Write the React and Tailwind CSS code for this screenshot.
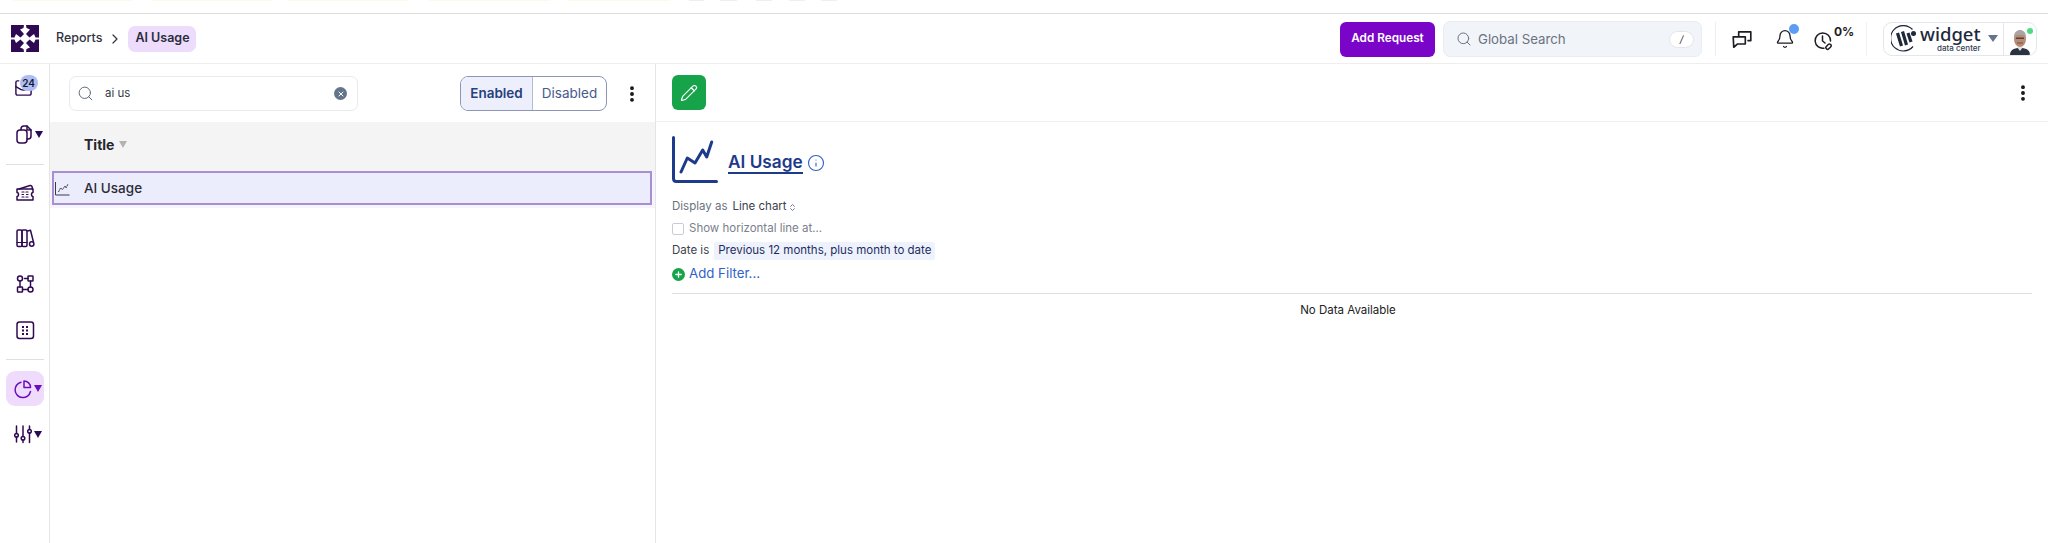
import React from "react";
import { Search, ChevronRight, Bell, Info, Pencil, Plus, X, EllipsisVertical, ChevronsUpDown } from "lucide-react";

const Caret = ({ className = "text-[#2a0a57]" }) => (
  <svg width="8" height="7" viewBox="0 0 8 7" className={className}><path d="M0 0h8L4 7z" fill="currentColor" /></svg>
);

const Logo = () => (
  <svg width="28" height="27" viewBox="0 0 28 27" className="shrink-0" fill="#2f0a52">
    <path d="M0 0H13L12.500 3L9 4.500L13 9L9.500 12.500L5 9L3.500 12.500H0z" />
    <path d="M28 0H15L15.500 3L19 4.500L15 9L18.500 12.500L23 9L24.500 12.500H28z" />
    <path d="M0 27H13L12.500 24L9 22.500L13 18L9.500 14.500L5 18L3.500 14.500H0z" />
    <path d="M28 27H15L15.500 24L19 22.500L15 18L18.500 14.500L23 18L24.500 14.500H28z" />
  </svg>
);

const WidgetMark = () => (
  <svg width="27" height="27" viewBox="0 0 27 27" className="shrink-0" fill="none" stroke="#1e293b">
    <path d="M22 21.500A12.700 12.700 0 1 1 21.500 4.500" strokeWidth="1.200" />
    <path d="M6.500 8l4 13M11.500 6.500l4 13.500M17 8l3 9" strokeWidth="3.200" />
    <circle cx="22.500" cy="8.500" r="2.500" fill="#1e293b" stroke="none" />
  </svg>
);

const Avatar = () => (
  <svg width="22" height="26" viewBox="0 0 22 26">
    <path d="M1 26c0-6 5-7 10-7s10 1 10 7z" fill="#2b3340" />
    <path d="M8 18h6l-3 4z" fill="#e8e4e0" />
    <ellipse cx="11" cy="10" rx="6" ry="8" fill="#b58c78" />
    <path d="M5 8c0-5 3-7 6-7s6 2 6 7c-2-3-10-3-12 0z" fill="#a9a5a2" />
    <rect x="7" y="8.500" width="8" height="1.500" fill="#5b4238" />
    <rect x="8" y="13.500" width="6" height="1" fill="#7a4a40" />
  </svg>
);

const Ico = ({ children, w = 20, h = 20, className = "text-[#2f0a52]" }) => (
  <svg width={w} height={h} viewBox="0 0 20 20" fill="none" stroke="currentColor" strokeWidth="1.500" strokeLinecap="round" strokeLinejoin="round" className={className}>
    {children}
  </svg>
);

const TopStrip = () => (
  <div className="flex h-[13px] items-start">
    <div className="flex h-[1px] w-full">
      <span className="w-[13px]" />
      <span className="w-[120px] bg-[#fbfbe8]" />
      <span className="w-[19px]" />
      <span className="w-[120px] bg-[#fbfbe8]" />
      <span className="w-[16px]" />
      <span className="w-[120px] bg-[#fbfbe8]" />
      <span className="w-[21px]" />
      <span className="w-[121px] bg-[#fbfbe8]" />
      <span className="w-[18px]" />
      <span className="w-[102px] bg-[#fbfbe8]" />
      <span className="w-[19px]" />
      <span className="w-[15px] bg-[#eeeff3]" />
      <span className="w-[16px]" />
      <span className="w-[17px] bg-[#eeeff3]" />
      <span className="w-[19px]" />
      <span className="w-[16px] bg-[#eeeff3]" />
      <span className="w-[17px]" />
      <span className="w-[16px] bg-[#eeeff3]" />
      <span className="w-[16px]" />
      <span className="w-[16px] bg-[#eeeff3]" />
    </div>
  </div>
);

const Header = () => (
  <header className="flex h-[51px] items-center border-t border-b border-t-[#dcdcdc] border-b-[#eeeeee] pl-[11px] pr-[11px]">
    <Logo />
    <span className="ml-[17px] text-[12.5px] font-medium text-[#33333f]">Reports</span>
    <ChevronRight size={16} strokeWidth={1.800} className="ml-[5px] text-[#33333f]" />
    <span className="ml-[5px] flex h-[26px] w-[68px] items-center justify-center rounded-[7px] bg-[#eedcfc] text-[12.5px] font-semibold text-[#2c2c3d]">AI Usage</span>
    <div className="flex-1" />
    <button className="mt-[1px] flex h-[35px] w-[95px] items-center justify-center rounded-[6px] bg-[#7a05c8] text-[11.75px] font-semibold text-white">Add Request</button>
    <div className="ml-[8px] mt-[1px] flex h-[36px] w-[259px] items-center rounded-[7px] border border-[#e9edf3] bg-[#f1f4f8] pl-[12px] pr-[7px]">
      <Search size={16} strokeWidth={1.500} className="text-[#6b7280]" />
      <span className="ml-[6px] pt-[1px] text-[13.25px] text-[#6b7280]">Global Search</span>
      <div className="flex-1" />
      <span className="flex h-[17px] w-[25px] items-center justify-center rounded-full border border-[#e2e5ea] bg-white text-[10px] italic text-[#333]">/</span>
    </div>
    <div className="ml-[13px] h-[34px] w-px bg-[#eeeeee]" />
    <div className="ml-[15px]">
      <Ico w={22} h={22} className="text-[#1c1c24]">
        <path d="M7 8V3.500h11v8h-2.500" />
        <path d="M2 8h11v6.500H6L2.500 17.500z" fill="#fff" />
      </Ico>
    </div>
    <div className="relative ml-[22px]">
      <Bell size={20} strokeWidth={1.600} className="text-[#1c1c24]" />
      <span className="absolute right-[-4px] top-[-5px] h-[10px] w-[10px] rounded-full bg-[#5b9cf6]" />
    </div>
    <div className="relative ml-[18px] flex h-[30px] w-[42px] items-start">
      <svg width="20" height="20" viewBox="0 0 20 20" className="mt-[7px]" fill="none" stroke="#1c1c24" strokeWidth="1.500">
        <path d="M11 17.200A7.700 7.700 0 1 1 17.500 10" strokeLinecap="round" />
        <path d="M9.500 5v5l2.500 2" strokeLinecap="round" />
        <rect x="12.500" y="14" width="6" height="3.400" rx="1.700" transform="rotate(-45 15.500 15.700)" />
      </svg>
      <span className="ml-[1px] mt-[1px] text-[12px] font-bold leading-[14px] text-[#1c1c24]">0%</span>
    </div>
    <div className="ml-[11px] h-[34px] w-px bg-[#f2f2f2]" />
    <div className="ml-[16px] flex h-[34px] w-[154px] items-stretch overflow-hidden rounded-[9px] border border-[#e3e6ea]">
      <div className="flex w-[120px] items-center border-r border-[#e3e6ea] pl-[7px]">
        <WidgetMark />
        <div className="ml-[2px] flex flex-col items-end">
          <span className="text-[18.5px] font-medium leading-[18px] text-[#1e293b]" style={{ fontFamily: '"Noto Sans", sans-serif' }}>widget</span>
          <span className="mt-[1px] text-[8px] font-medium leading-[9px] text-[#334155]">data center</span>
        </div>
        <svg width="10" height="7" viewBox="0 0 10 7" className="ml-[7px] text-[#64748b]"><path d="M0 0h10L5 7z" fill="currentColor" /></svg>
      </div>
      <div className="relative flex flex-1 items-end justify-center">
        <Avatar />
        <span className="absolute right-[3px] top-[5px] h-[6px] w-[6px] rounded-full bg-[#4ade80]" />
      </div>
    </div>
  </header>
);

const Sidebar = () => (
  <aside className="flex w-[50px] shrink-0 flex-col items-center border-r border-[#e5e5e8] pt-[11px]">
    <div className="relative h-[24px] w-[38px]">
      <span className="absolute left-[8px] top-[3px]">
        <Ico w={19} h={19}>
          <path d="M5 3H3.500Q2 3 2 4.500V16q0 2 2 2h12q2 0 2-2V4.500Q18 3 16.500 3" />
          <path d="M2 9l5 3q3 1.500 6 0l5-3" />
        </Ico>
      </span>
      <span className="absolute left-[14px] top-0 flex h-[16px] w-[18px] items-center justify-center rounded-full bg-[#aebdf3] text-[10px] font-semibold text-[#1a1a2e]">24</span>
    </div>
    <div className="mt-[25px] flex h-[20px] items-center gap-[1px] pl-[8px]">
      <Ico>
        <path d="M7 6V5Q7 2 10 2H13L17 6V12Q17 15 14 15H13" />
        <path d="M13 2V6H17" />
        <rect x="3" y="6" width="10" height="13" rx="3" />
      </Ico>
      <Caret />
    </div>
    <div className="mt-[20px] h-px w-[38px] bg-[#dfdfe3]" />
    <div className="mt-[17px] h-[20px]">
      <Ico>
        <path d="M4 7l11-3.500q1.500-.3 2 1L17.500 7" />
        <path d="M2 7h16v3.500q-1.500 0-1.500 2t1.500 2V18H2v-3.500q1.500 0 1.500-2T2 10.500z" />
        <path d="M7 10h2M7 15h2M11 10h2M11 15h2M7 12.500h1.500M11.500 12.500H13" strokeWidth="1.200" />
      </Ico>
    </div>
    <div className="mt-[26px] h-[20px]">
      <Ico>
        <rect x="2" y="2" width="5" height="16.500" rx="1.200" />
        <rect x="7" y="2" width="5" height="16.500" rx="1.200" />
        <path d="M12.500 3l3-.8 3 12" />
        <circle cx="16.700" cy="16" r="2.200" />
        <path d="M2 14.500h10" strokeWidth="1.200" />
      </Ico>
    </div>
    <div className="mt-[26px] h-[20px]">
      <Ico>
        <circle cx="5" cy="4.500" r="2.500" />
        <path d="M5 7v6" />
        <rect x="2.500" y="13" width="5" height="5" rx=".6" />
        <rect x="13" y="2" width="5" height="5" rx=".6" />
        <path d="M7.500 15.500H13M13 4.500H9.500" />
        <path d="M15.500 7v6" />
        <circle cx="15.500" cy="15.500" r="2.500" />
      </Ico>
    </div>
    <div className="mt-[26px] h-[20px]">
      <Ico>
        <rect x="2" y="2" width="16.500" height="16.500" rx="2.500" />
        <path d="M7 7h2M11 7h2M7 10.500h2M11 10.500h2M7 14h2M11 14h2" strokeWidth="1.800" strokeLinecap="butt" />
      </Ico>
    </div>
    <div className="mt-[19px] h-px w-[38px] bg-[#dfdfe3]" />
    <div className="mt-[11px] flex h-[35px] w-[38px] items-center justify-center gap-[1px] rounded-[9px] bg-[#efdcfd] pl-[6px]">
      <Ico className="text-[#6a0dc0]">
        <path d="M8 3.200A7.800 7.800 0 1 0 17.500 12.500" />
        <path d="M11 2a6.500 6.500 0 0 1 6.500 6.500H11z" />
      </Ico>
      <Caret className="text-[#6a0dc0]" />
    </div>
    <div className="mt-[18px] flex items-center gap-[1px] pl-[6px]">
      <Ico>
        <path d="M3.500 2v7.500M3.500 13v5M10 2v10.500M10 16v2.500M16.500 5.500V2M16.500 9v9.500" />
        <circle cx="3.500" cy="11.300" r="1.800" />
        <circle cx="10" cy="14.300" r="1.800" />
        <circle cx="16.500" cy="7.300" r="1.800" />
      </Ico>
      <Caret />
    </div>
  </aside>
);

const ListPanel = () => (
  <section className="flex w-[606px] shrink-0 flex-col border-r border-[#e5e5e8]">
    <div className="flex h-[58px] items-center pl-[19px] pr-[13px] pt-[1px]">
      <div className="flex h-[35px] w-[289px] items-center rounded-[7px] border border-[#e8eaee] pl-[7px] pr-[10px]">
        <Search size={17} strokeWidth={1.400} className="text-[#5f6b7a]" />
        <span className="ml-[11px] text-[11.5px] text-[#333944]">ai us</span>
        <div className="flex-1" />
        <span className="flex h-[13px] w-[13px] items-center justify-center rounded-full bg-[#64748b]">
          <X size={8} strokeWidth={3} className="text-white" />
        </span>
      </div>
      <div className="flex-1" />
      <div className="flex h-[35px] w-[147px] overflow-hidden rounded-[8px] border border-[#8d97b5] text-[13.5px]">
        <span className="flex w-[72px] items-center justify-center border-r border-[#b5bcd2] bg-[#edf0fc] font-semibold text-[#27407e]">Enabled</span>
        <span className="flex flex-1 items-center justify-center text-[#475a8c]">Disabled</span>
      </div>
      <EllipsisVertical size={20} strokeWidth={2.600} className="ml-[15px] text-[#111]" />
    </div>
    <div className="flex h-[49px] items-center bg-[#f4f4f4] pb-[5px] pl-[34px]">
      <span className="text-[14px] font-bold text-[#26262e]">Title</span>
      <Caret className="ml-[5px] text-[#b3b3b3]" />
    </div>
    <div className="bg-[#f4f5fd] pl-[2px] pr-[3px] pb-[3px]">
      <div className="flex h-[34px] items-center border-2 border-[#a98fcf] bg-[#ecedfc]">
        <svg width="15" height="15" viewBox="0 0 15 15" className="ml-[1px]" fill="none" stroke="#3a3a4a" strokeWidth="1">
          <path d="M.5 1v13h14" />
          <path d="M3.500 11l2-4 2 1.500 2.500-3.500 1 2 2-4" strokeDasharray="2 .6" />
        </svg>
        <span className="ml-[14px] text-[13.5px] font-medium text-[#2b2b38]">AI Usage</span>
      </div>
    </div>
  </section>
);

const Detail = () => (
  <section className="flex min-w-0 flex-1 flex-col">
    <div className="flex h-[58px] items-center border-b border-[#eeeeee] pl-[16px] pr-[15px]">
      <button className="flex h-[35px] w-[34px] items-center justify-center rounded-[6px] bg-[#17a34a]">
        <Pencil size={18} strokeWidth={1.600} className="text-white" />
      </button>
      <div className="flex-1" />
      <EllipsisVertical size={20} strokeWidth={2.600} className="text-[#111]" />
    </div>
    <div className="px-[16px]">
      <div className="mt-[14px] flex h-[47px] items-end">
        <svg width="46" height="47" viewBox="0 0 46 47" fill="none" stroke="#1e3a8a" strokeWidth="3" strokeLinecap="round" strokeLinejoin="round">
          <path d="M1.500 1.500v41q0 3 3 3h40" />
          <path d="M9 36l6.300-14 7.700 5 7.700-13 4 7 5-15" />
        </svg>
        <span className="ml-[10px] mb-[9px] border-b-2 border-[#1e3a8a] text-[17.25px] font-semibold leading-[21px] text-[#1e3a8a]">AI Usage</span>
        <Info size={18} strokeWidth={1.500} className="ml-[4px] mb-[11px] text-[#2f62c9]" />
      </div>
      <div className="mt-[15px] flex h-[18px] items-center text-[11.5px]">
        <span className="text-[#6b7280]">Display as</span>
        <span className="ml-[5px] text-[#3d4250]">Line chart</span>
        <ChevronsUpDown size={9} strokeWidth={2.500} className="ml-[1px] text-[#6b7280]" />
      </div>
      <div className="mt-[4px] flex h-[18px] items-center text-[11.5px] text-[#7a808c]">
        <span className="h-[12px] w-[12px] rounded-[2px] border border-[#c9ccd2]" />
        <span className="ml-[5px]">Show horizontal line at...</span>
      </div>
      <div className="mt-[4px] flex h-[18px] items-center text-[11.5px]">
        <span className="text-[#3d4250]">Date is</span>
        <span className="ml-[5px] flex h-[18px] items-center rounded-[2px] bg-[#eef2fd] px-[4px] text-[#1e2d5f]">Previous 12 months, plus month to date</span>
      </div>
      <div className="mt-[3px] flex h-[22px] items-center">
        <span className="flex h-[13px] w-[13px] items-center justify-center rounded-full bg-[#17a34a]">
          <Plus size={9} strokeWidth={3.500} className="text-white" />
        </span>
        <span className="ml-[4px] text-[13.25px] text-[#2f62c9]">Add Filter...</span>
      </div>
      <div className="mt-[8px] h-px bg-[#dfdfe3]" />
      <div className="mt-[8px] pr-[8px] text-center text-[11.5px] text-[#222]">No Data Available</div>
    </div>
  </section>
);

export default function App() {
  return (
    <div className="flex h-[543px] w-[2048px] flex-col overflow-hidden bg-white" style={{ fontFamily: 'Inter, "Liberation Sans", sans-serif' }}>
      <TopStrip />
      <Header />
      <main className="flex min-h-0 flex-1">
        <Sidebar />
        <ListPanel />
        <Detail />
      </main>
    </div>
  );
}
